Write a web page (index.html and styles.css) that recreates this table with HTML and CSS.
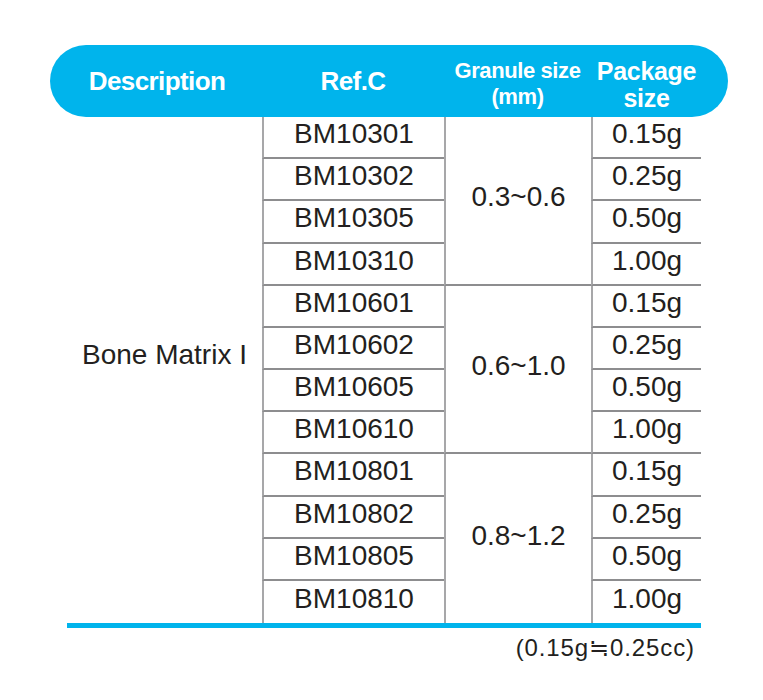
FILE: index.html
```html
<!DOCTYPE html>
<html>
<head>
  <title>Bone Matrix I</title>
  <link rel="stylesheet" href="styles.css">
</head>
<body>
  <div class="sheet">
    <div class="head">
      <div class="head-cell head-desc">Description</div>
      <div class="head-cell">Ref.C</div>
      <div class="head-cell head-small">Granule size<br>(mm)</div>
      <div class="head-cell head-pkg">Package<br>size</div>
    </div>

    <div class="grid">
      <div class="desc">Bone Matrix I</div>

      <div class="ref">BM10301</div>
      <div class="gran">0.3~0.6</div>
      <div class="pkg">0.15g</div>
      <div class="ref">BM10302</div>
      <div class="pkg">0.25g</div>
      <div class="ref">BM10305</div>
      <div class="pkg">0.50g</div>
      <div class="ref">BM10310</div>
      <div class="pkg">1.00g</div>

      <div class="ref">BM10601</div>
      <div class="gran">0.6~1.0</div>
      <div class="pkg">0.15g</div>
      <div class="ref">BM10602</div>
      <div class="pkg">0.25g</div>
      <div class="ref">BM10605</div>
      <div class="pkg">0.50g</div>
      <div class="ref">BM10610</div>
      <div class="pkg">1.00g</div>

      <div class="ref">BM10801</div>
      <div class="gran last">0.8~1.2</div>
      <div class="pkg">0.15g</div>
      <div class="ref">BM10802</div>
      <div class="pkg">0.25g</div>
      <div class="ref">BM10805</div>
      <div class="pkg">0.50g</div>
      <div class="ref last">BM10810</div>
      <div class="pkg last">1.00g</div>
    </div>

    <div class="note">(0.15g≒0.25cc)</div>
  </div>
</body>
</html>
```

FILE: styles.css
```css
body {
  margin: 0;
  background: #fff;
  font-family: "Liberation Sans", Arial, sans-serif;
  color: #231f20;
}
.sheet {
  padding: 45px 0 0 50px;
  width: 678px;
}
.head {
  display: grid;
  grid-template-columns: 212px 182px 147px 137px;
  height: 72px;
  background: #00b4ec;
  border-radius: 36px;
  color: #fff;
  font-weight: bold;
}
.head-cell {
  display: flex;
  align-items: center;
  justify-content: center;
  text-align: center;
  font-size: 26px;
  letter-spacing: -0.6px;
}
.head-desc {
  padding-left: 2px;
}
.head-small {
  font-size: 22px;
  line-height: 26px;
  letter-spacing: -0.4px;
  padding-top: 5px;
}
.head-pkg {
  font-size: 25px;
  line-height: 27px;
  letter-spacing: -0.3px;
  padding-right: 26px;
  padding-top: 8px;
}
.grid {
  display: grid;
  grid-template-columns: 195px 182px 147px 110px;
  grid-template-rows: repeat(12, 1fr);
  width: 634px;
  height: 506px;
  margin-left: 17px;
  border-bottom: 5px solid #00b4ec;
  font-size: 28px;
}
.grid > div {
  display: flex;
  align-items: center;
  justify-content: center;
  box-sizing: border-box;
  padding-bottom: 6px;
}
.grid > .desc {
  grid-column: 1;
  grid-row: span 12;
  padding: 0 0 30px 0;
}
.ref {
  grid-column: 2;
  border-left: 2px solid #a7a7a9;
  border-bottom: 2px solid #8d8d8f;
}
.gran {
  grid-column: 3;
  grid-row: span 4;
  border-left: 2px solid #a7a7a9;
  border-bottom: 2px solid #8d8d8f;
}
.pkg {
  grid-column: 4;
  border-left: 2px solid #a7a7a9;
  border-bottom: 2px solid #8d8d8f;
}
.grid > .last {
  border-bottom: none;
}
.note {
  margin: 6px 0 0 0;
  padding-right: 33px;
  text-align: right;
  font-size: 24px;
  letter-spacing: 0.9px;
}
```
